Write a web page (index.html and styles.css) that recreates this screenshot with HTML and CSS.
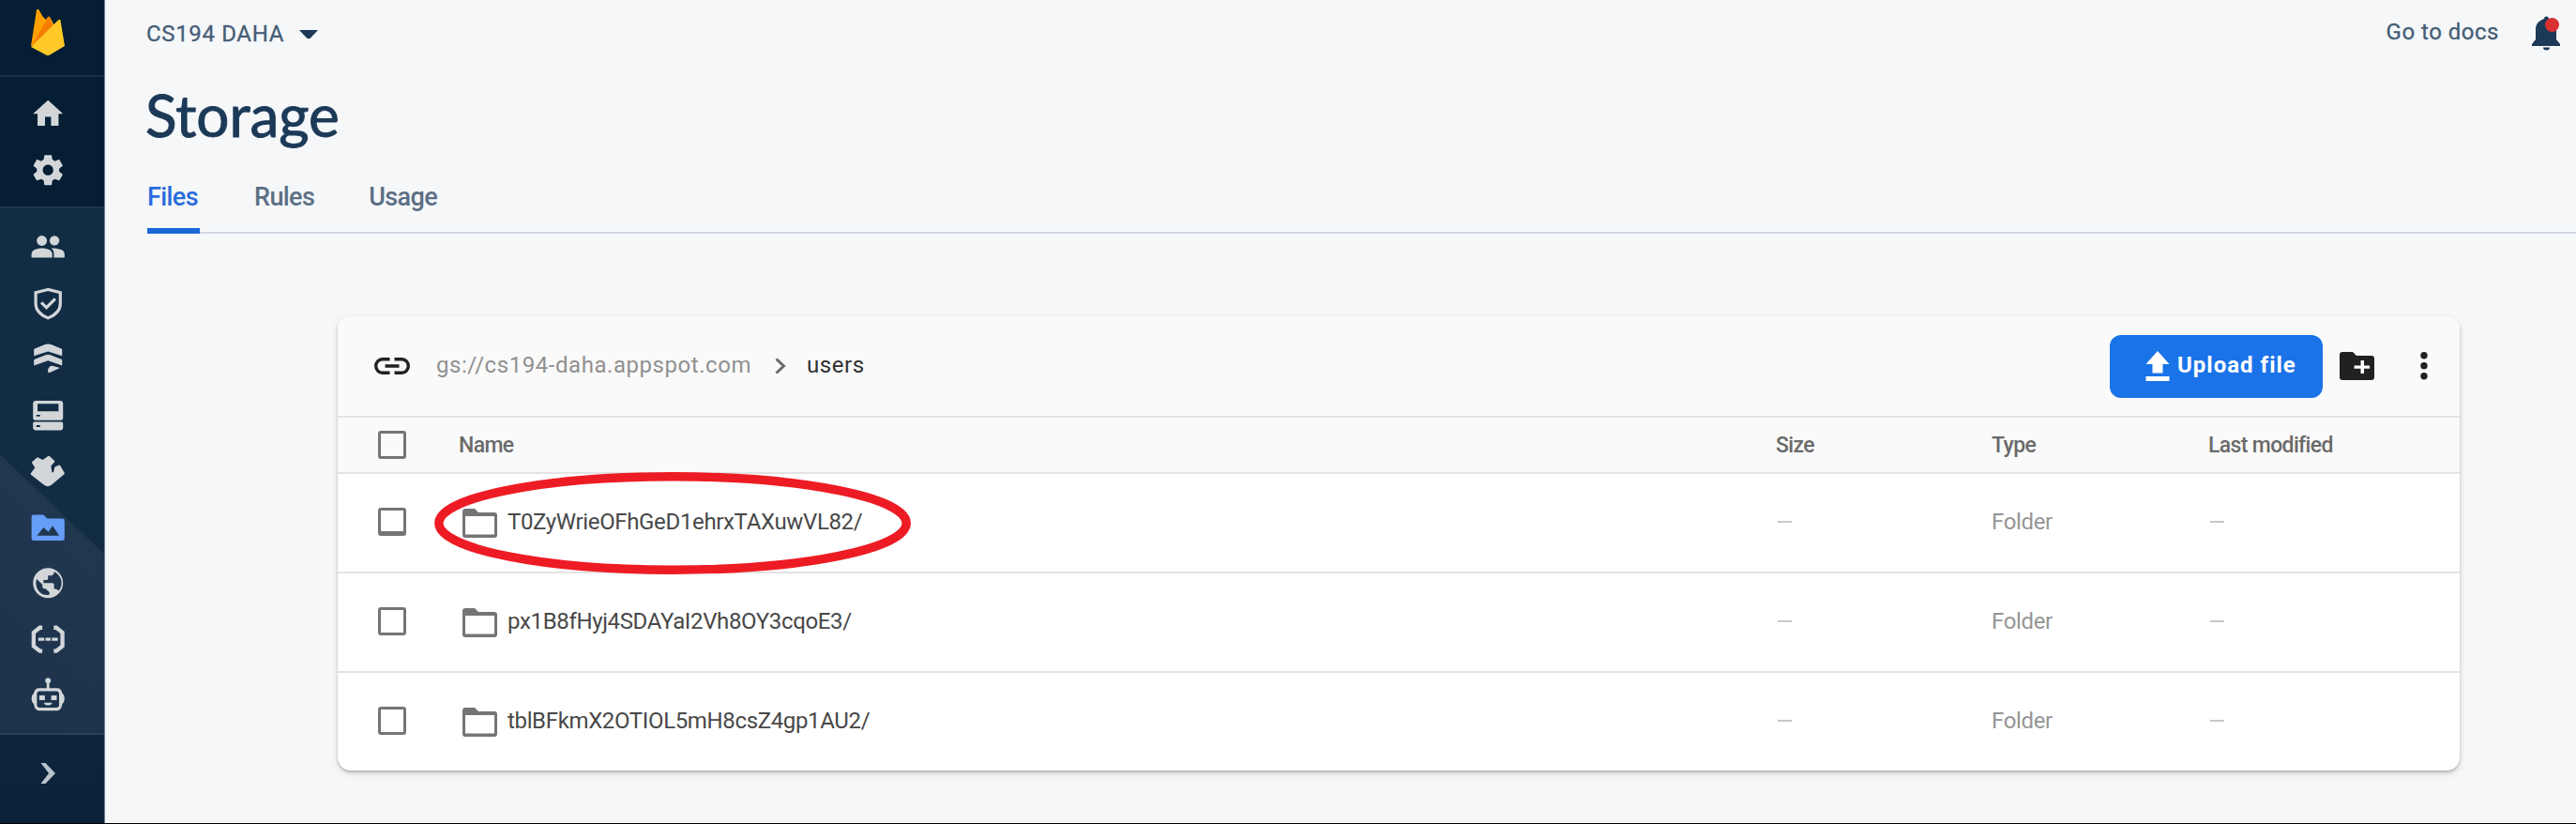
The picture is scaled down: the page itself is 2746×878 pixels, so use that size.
FILE: index.html
```html
<!DOCTYPE html>
<html lang="en">
<head>
<meta charset="utf-8">
<title>Storage</title>
<link rel="stylesheet" href="styles.css">
</head>
<body>
<div class="app">
  <nav class="sidebar">
    <div class="brand">
      <svg width="36" height="50" viewBox="0 0 36 50"><path fill="#ffa000" d="M0 40 6 1.500Q7 0 8.500 1.500L12.500 8.500 16 12 18 9Q19 8 20 9L30 27Z"/><path fill="#f57c00" d="M0.500 40 19 9 24 19Z"/><path fill="#ffca28" d="M0 41 29 12.500Q31 11 31.500 13L36 40 20 49.500Q18 50.500 16 49.500Z"/></svg>
    </div>
    <div class="group group-top">
      <a class="item"><svg class="ic" viewBox="0 0 24 24"><path d="M10 20v-6h4v6h5v-8h3L12 3 2 12h3v8z"/></svg></a>
      <a class="item"><svg class="ic" viewBox="0 0 24 24"><path d="M19.430 12.980c.04-.32.07-.64.07-.98s-.03-.66-.07-.98l2.110-1.650c.19-.15.24-.42.12-.64l-2-3.460c-.12-.22-.39-.3-.61-.22l-2.490 1c-.52-.4-1.080-.73-1.690-.98l-.38-2.650C14.460 2.180 14.250 2 14 2h-4c-.25 0-.46.18-.49.42l-.38 2.650c-.61.25-1.170.59-1.690.98l-2.490-1c-.23-.09-.49 0-.61.22l-2 3.460c-.13.22-.07.49.12.64l2.110 1.650c-.04.32-.07.65-.07.98s.03.66.07.98l-2.110 1.650c-.19.15-.24.42-.12.64l2 3.460c.12.22.39.3.61.22l2.490-1c.52.4 1.080.73 1.690.98l.38 2.650c.03.24.24.42.49.42h4c.25 0 .46-.18.49-.42l.38-2.650c.61-.25 1.170-.59 1.690-.98l2.490 1c.23.09.49 0 .61-.22l2-3.460c.12-.22.07-.49-.12-.64l-2.110-1.650zM12 15.500c-1.930 0-3.500-1.570-3.500-3.500s1.570-3.500 3.500-3.500 3.500 1.570 3.500 3.500-1.570 3.500-3.500 3.500z"/></svg></a>
    </div>
    <div class="group group-main">
      <a class="item"><svg class="ic" viewBox="0 0 24 24"><circle cx="7.900" cy="7.800" r="3.400"/><circle cx="16.300" cy="7.800" r="3.200"/><path d="M8 12.800c-2.400 0-7 .9-7 3.700V19h13.800v-2.500c0-2.800-4.400-3.700-6.800-3.700zM14 12.800c1.500.9 1.900 2.200 1.900 3.700V19H23v-2.500c0-2.800-4.400-3.700-9-3.700z"/></svg></a>
      <a class="item"><svg class="ic" viewBox="0 0 24 24"><path class="line" d="M12 2.800 3.800 4.800v7.500c0 4 3.500 7.500 8.200 9.500 4.700-2 8.200-5.500 8.200-9.500V4.800zM7.500 11.500l3.500 3.300 5.800-5.800"/></svg></a>
      <a class="item"><svg class="ic" viewBox="0 0 24 24"><path d="M9.600 2.600q2.400-.8 4.800 0l6.400 2.700q.6.300.6.900v3.900L12 7.200l-9.400 2.900V6.200q0-.6.600-.9zM10.500 9.500q1.500-.5 3 0l7.300 2.900q.6.300.6.900v3.300L12 13.300l-9.400 3.300v-3.300q0-.6.600-.9zM13.400 17q1-.4 2.600 0l4 1.100-6.800 3.100q-1.300.4-1.300-.8 0-2.200 1.500-3.400z"/></svg></a>
      <a class="item"><svg class="ic" viewBox="0 0 24 24"><path fill-rule="evenodd" d="M4 2.500h16a2 2 0 0 1 2 2V14a1.500 1.500 0 0 1-1.500 1.500h-17A1.500 1.500 0 0 1 2 14V4.500a2 2 0 0 1 2-2zM5 4.600v5h14v-5zM4.200 11.800v1.200h2.500v-1.200zM3 16.500h18a1 1 0 0 1 1 1v2.700a2 2 0 0 1-2 2H4a2 2 0 0 1-2-2v-2.700a1 1 0 0 1 1-1zM4.200 18.800V20h2.500v-1.200z"/></svg></a>
      <a class="item"><svg class="ic" viewBox="0 0 24 24"><path d="M.6 14.300q-.4-.5 0-1l2.700-3.700L1.400 6.600q-.3-.5.100-1L4.600 2.900q.5-.4 1 0l2.900 1.500 3.500-2.500q.5-.4 1 0l3.200 3q.5.500 0 1L14 8.500l.6 4.200h1l.9-3.700 2.600-1.100q.7-.2 1.100.4l2.700 4.600q.3.500-.1 1L14.400 21q-2.600 2-5.200 0z"/></svg></a>
      <a class="item active"><svg class="ic" viewBox="0 0 24 24"><path fill-rule="evenodd" d="M2.600 3.500H9L11.500 6h10A1.500 1.500 0 0 1 23 7.500v11.700a1.500 1.500 0 0 1-1.500 1.500h-19A1.500 1.500 0 0 1 1 19.200V5a1.500 1.500 0 0 1 1.600-1.500zM4.700 17.300h14.800L15 10.800l-2.700 4L9 11.800z"/></svg></a>
      <a class="item"><svg class="ic" viewBox="0 0 24 24"><path d="M12 2C6.480 2 2 6.480 2 12s4.480 10 10 10 10-4.480 10-10S17.520 2 12 2zm.9 17.900c-4.800.9-8.900-2.700-8.900-7.900 0-1.100.1-1.700.5-2.600l3.800 3.800v1.300c0 1 1 1.300 2 1.300l2.600 2.300zm6-2.500c-.3-.8-1-1.400-1.900-1.400h-1v-3c0-.5-.5-1-1-1H9v-2h2c.6 0 1-.5 1-1V7h2c1.100 0 2-.9 2-2v-.4c2.900 1.200 5 4.100 5 7.400 0 2.100-.8 4-2.100 5.400z"/></svg></a>
      <a class="item"><svg class="ic" viewBox="0 0 24 24"><path class="brace" d="M8.200 4.200H6.500L2.400 7.500v9l4.100 3.300h1.700M15.800 4.200h1.700l4.100 3.300v9l-4.100 3.300h-1.700"/><path d="M5.500 11h4v2h-4zM10.300 11h3.400v2h-3.400zM14.500 11h4v2h-4z"/></svg></a>
      <a class="item"><svg class="ic" viewBox="0 0 24 24"><path fill-rule="evenodd" d="M11.100 7V3.700a1.900 1.900 0 1 1 1.800 0V7H18q3 0 3.500 3.500Q23 11.500 23 14t-1.500 3.500Q21 22 18 22H6q-3 0-3.500-4.500Q1 16.500 1 14t1.500-3.500Q3 7 6 7zM6.500 9Q4.600 9 4.600 11v7q0 2 1.900 2h11q1.900 0 1.900-2v-7q0-2-1.900-2z"/><path d="M6.200 11.800h3.700v3.200H6.200zM14.100 11.800h3.700v3.200h-3.700zM9.200 16.700h5.600q-.6 1.800-2.800 1.800t-2.800-1.800z"/></svg></a>
    </div>
    <div class="collapse"><svg width="17" height="24" viewBox="0 0 17 24"><path d="M.5 1H5.500L16 12 5.500 23H.5L9 12z" fill="#b9c3cc"/></svg></div>
  </nav>
  <main class="main">
    <header class="topbar">
      <div class="project"><span class="t-project">CS194 DAHA</span><svg width="20" height="10" viewBox="0 0 20 10"><path fill="#1c3a57" d="M0 0h20L12 8.500Q10 10 8 8.500z"/></svg></div>
      <div class="tools"><span class="t-docs">Go to docs</span>
        <span class="bell"><svg width="30" height="38" viewBox="0 0 30 38"><path fill="#1c3a57" d="M13 3a2.500 2.500 0 0 1 5 0C23 5 26 8 26 14v11l4 5v2H0v-2l4-5V14C4 8 8 5 13 3zM12 33.500h7a3.500 3 0 0 1-7 0z"/></svg><i class="dot"></i></span>
      </div>
    </header>
    <h1 class="title">Storage</h1>
    <div class="tabs"><a class="tab selected"><span>Files</span></a><a class="tab"><span>Rules</span></a><a class="tab"><span>Usage</span></a></div>
    <section class="card">
      <div class="card-head">
        <svg class="link" width="38" height="18" viewBox="0 0 38 18"><path fill="none" stroke="#212121" stroke-width="3.400" d="M16.500 1.700H8.500a6.800 7.300 0 0 0 0 14.600h8M21.500 1.700h8a6.800 7.300 0 0 1 0 14.600h-8M11.500 9h15"/></svg>
        <span class="t-bucket">gs://cs194-daha.appspot.com</span>
        <svg class="crumb" width="12" height="18" viewBox="0 0 12 18"><path fill="none" stroke="#6b6b6b" stroke-width="3" d="M1.500 1.500 9.500 9l-8 7.500"/></svg>
        <span class="t-users">users</span>
        <div class="actions">
          <button class="upload"><svg width="26" height="32" viewBox="0 0 26 32"><path fill="#fff" d="M13 0 25.500 14H18.500v9.500h-11V14H.5zM.5 27h25v5H.5z"/></svg><span>Upload file</span></button>
          <svg class="newfolder" width="37" height="30" viewBox="0 0 37 30"><path fill="#212121" d="M3 0h11l4 4h16q3 0 3 3v20q0 3-3 3H3q-3 0-3-3V3q0-3 3-3z"/><path fill="#fff" d="M22.500 9h3.500v5.500h6v3.200h-6V23h-3.500v-5.300h-7v-3.200h7z"/></svg>
          <svg class="more" width="8" height="30" viewBox="0 0 8 30"><g fill="#212121"><ellipse cx="4" cy="3.800" rx="3.700" ry="3.700"/><ellipse cx="4" cy="14.700" rx="3.700" ry="3.700"/><ellipse cx="4" cy="25.800" rx="3.700" ry="3.700"/></g></svg>
        </div>
      </div>
      <div class="row labels"><i class="check"></i><span>Name</span><span>Size</span><span>Type</span><span>Last modified</span></div>
      <div class="row entry"><i class="check focused"></i><span class="file"><svg class="folder" viewBox="0 0 37 31"><path fill="#757575" fill-rule="evenodd" d="M3 0h10l4 4h17q3 0 3 3v21q0 3-3 3H3q-3 0-3-3V3q0-3 3-3zM3 8v19.500h31V8z"/></svg><span>T0ZyWrieOFhGeD1ehrxTAXuwVL82/</span><svg class="ring" viewBox="0 0 508 109"><ellipse cx="254" cy="54.500" rx="249.200" ry="49.700" fill="none" stroke="#ed1c24" stroke-width="9.400"/></svg></span><i class="dash"></i><span class="kind">Folder</span><i class="dash"></i></div>
      <div class="row entry"><i class="check"></i><span class="file"><svg class="folder" viewBox="0 0 37 31"><path fill="#757575" fill-rule="evenodd" d="M3 0h10l4 4h17q3 0 3 3v21q0 3-3 3H3q-3 0-3-3V3q0-3 3-3zM3 8v19.500h31V8z"/></svg><span>px1B8fHyj4SDAYaI2Vh8OY3cqoE3/</span></span><i class="dash"></i><span class="kind">Folder</span><i class="dash"></i></div>
      <div class="row entry last"><i class="check"></i><span class="file"><svg class="folder" viewBox="0 0 37 31"><path fill="#757575" fill-rule="evenodd" d="M3 0h10l4 4h17q3 0 3 3v21q0 3-3 3H3q-3 0-3-3V3q0-3 3-3zM3 8v19.500h31V8z"/></svg><span>tblBFkmX2OTIOL5mH8csZ4gp1AU2/</span></span><i class="dash"></i><span class="kind">Folder</span><i class="dash"></i></div>
    </section>
  </main>
</div>
</body>
</html>
```
FILE: styles.css
```css
* { box-sizing: border-box; }
body { margin: 0; background: #f5f7f9; font-family: Roboto, sans-serif; font-size: 24px; overflow: hidden; }
svg { display: block; flex: none; }
span { white-space: nowrap; }
.app { display: flex; height: 878px; border-bottom: 1px solid #000; }

.sidebar { width: 112px; flex: none; display: flex; flex-direction: column; background: #051e34; border-right: 1px solid #6d7c8b; }
.brand { height: 82px; padding: 9px 0 0 33px; border-bottom: 2px solid #1a3045; }
.group { display: flex; flex-direction: column; }
.group-top { height: 138px; padding-top: 9px; }
.group-main { height: 563px; padding-top: 11px; border-top: 2px solid #1b344b; border-bottom: 2px solid #2a4158; background: linear-gradient(43.700deg, #1c324b 0, #20374f 214px, #122c44 215px); }
.item { height: 59.800px; padding-left: 32px; display: flex; align-items: center; }
.ic { width: 38.400px; height: 38.400px; fill: #d2d6d9; }
.line, .brace { fill: none; stroke: #d2d6d9; stroke-width: 2; }
.brace { stroke-width: 2.700; }
.active .ic { fill: #669df6; }
.collapse { flex: 1; padding: 29px 0 0 43px; background: linear-gradient(#0e253d, #0a223a); }

.main { flex: 1; min-width: 0; }
.topbar { height: 80px; display: flex; justify-content: space-between; padding: 0 17px 0 44px; color: #455d75; letter-spacing: .5px; -webkit-text-stroke: .3px; }
.t-project { letter-spacing: .65px; }
.project { display: flex; gap: 16px; height: 71px; align-items: center; }
.project svg { margin-top: 3px; }
.tools { display: flex; height: 72px; align-items: center; gap: 35px; }
.t-docs { margin-top: -4px; }
.bell { position: relative; }
.dot { position: absolute; left: 14px; top: 2px; width: 15px; height: 15px; border-radius: 50%; background: #d93030; }
.title { margin: 0 0 0 43px; height: 88px; font: 400 62px/85px Lato, sans-serif; color: #1c3a57; -webkit-text-stroke: 1px; }
.tabs { display: flex; height: 81px; margin-left: 45px; border-bottom: 2px solid #cfd8e3; gap: 58px; }
.tab { height: 81px; padding-top: 26px; line-height: 32px; font-size: 27px; font-weight: 500; color: #5c6f84; letter-spacing: -.6px; }
.tab.selected { width: 56px; color: #2a6bdc; border-bottom: 6px solid #1a67d6; border-radius: 5px 5px 0 0; }

.card { width: 2262px; margin: 88px 0 0 248px; border-radius: 14px; background: #fff; box-shadow: 0 2px 3px rgba(0,0,0,.22), 0 3px 8px rgba(0,0,0,.1); }
.card-head { height: 108px; display: flex; align-items: center; padding: 0 34px 0 39px; border-bottom: 2px solid #e3e3e3; background: #fafafa; border-radius: 14px 14px 0 0; }
.t-bucket, .t-users { margin-top: -2px; letter-spacing: .55px; }
.t-bucket { margin-left: 28px; color: #909090; }
.crumb { margin-left: 25px; }
.t-users { margin-left: 22px; color: #303030; }
.actions { margin-left: auto; display: flex; align-items: center; }
.upload { width: 227px; height: 67px; border: 0; border-radius: 12px; background: #1a73e8; color: #fff; font: 700 24px Roboto, sans-serif; letter-spacing: 1px; display: flex; align-items: center; padding: 0 0 0 38px; gap: 8px; }
.upload span { margin-top: -3px; }
.newfolder { margin-left: 18px; }
.more { margin-left: 49px; }
.row { display: grid; grid-template-columns: 86px 1404px 230px 231px 1fr; align-items: center; padding-left: 43px; height: 106px; border-bottom: 2px solid #e3e3e3; letter-spacing: -.35px; }
.labels { height: 60px; background: #fafafa; color: #6a6a6a; font-weight: 500; font-size: 23px; letter-spacing: -.65px; }
.last { height: 104px; border-bottom: 0; }
.check { width: 30px; height: 30px; border: 3px solid #757575; border-radius: 3px; }
.entry .check { margin-top: -3px; }
.entry .focused { border-bottom-width: 5px; }
.file { position: relative; display: flex; align-items: center; padding-left: 4px; gap: 11px; color: #484848; }
.file span, .kind { margin-top: -2px; }
.folder { width: 37px; height: 31px; }
.ring { position: absolute; left: -26px; top: -39px; width: 508px; height: 109px; }
.dash { width: 15px; height: 2px; margin: -2px 0 0 2px; background: #c8c8c8; }
.kind { color: #959595; }
```
